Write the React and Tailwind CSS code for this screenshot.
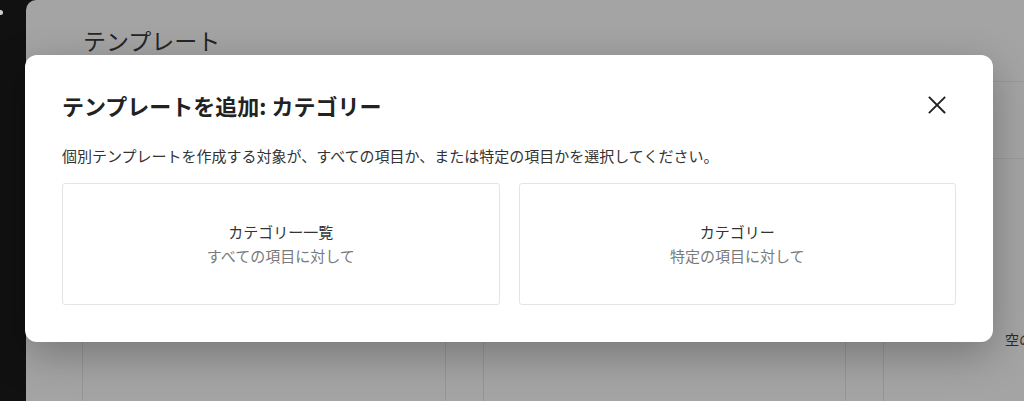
import React from "react";

const font = { fontFamily: '"Noto Sans CJK JP", "Noto Sans", sans-serif' };

export default function App() {
  return (
    <div className="relative w-[1024px] h-[401px] overflow-hidden bg-[#111111] flex" style={font}>
      {/* sidebar */}
      <div className="w-[26px] shrink-0 relative">
        <div className="absolute left-0 top-[10px] w-[3px] h-[5px] rounded-r-full bg-[#cfcfcf]" />
      </div>
      {/* main page (dimmed) */}
      <div className="flex-1 bg-[#a4a4a4] rounded-tl-[10px] flex flex-col">
        <div className="h-[82px] pl-[57px] pt-[24px] text-[23px] leading-[32px] text-[#262626] border-b border-[#999999]">
          テンプレート
        </div>
        <div className="h-[77px] border-b border-[#999999]" />
        <div className="flex-1 flex pl-[56px]">
          <div className="w-[363px] border-l border-[#959595]" />
          <div className="w-[38px] border-l border-[#959595]" />
          <div className="w-[362px] border-l border-[#959595]" />
          <div className="w-[38px] border-l border-[#959595]" />
          <div className="flex-1 border-l border-[#959595] pl-[121px] pt-[170px] text-[14px] leading-[20px] text-[#2a2a2a] whitespace-nowrap">
            空の
          </div>
        </div>
      </div>

      {/* modal */}
      <div className="absolute left-[25px] top-[55px] w-[968px] h-[287px] bg-white rounded-[12px] shadow-[0_12px_40px_rgba(0,0,0,0.28)] px-[37px] pt-[35px] flex flex-col">
        <div className="flex items-center justify-between h-[30px]">
          <h2 className="text-[22px] leading-[30px] font-bold text-[#222222]">
            テンプレートを追加: カテゴリー
          </h2>
          <button className="w-[24px] h-[24px] mr-[7px] flex items-center justify-center text-[#222222]">
            <svg width="20" height="20" viewBox="0 0 20 20" fill="none" stroke="currentColor" strokeWidth="1.8" strokeLinecap="square">
              <path d="M2.5 2.5 L17.5 17.5 M17.5 2.5 L2.5 17.5" />
            </svg>
          </button>
        </div>
        <p className="mt-[25px] text-[15px] leading-[22px] text-[#333333]">
          個別テンプレートを作成する対象が、すべての項目か、または特定の項目かを選択してください。
        </p>
        <div className="mt-[16px] flex gap-[19px]">
          {[
            ["カテゴリー一覧", "すべての項目に対して"],
            ["カテゴリー", "特定の項目に対して"],
          ].map(([t, s]) => (
            <div
              key={t}
              className="flex-1 h-[122px] border border-[#e4e4e4] rounded-[3px] flex flex-col items-center justify-center"
            >
              <div className="text-[15px] leading-[24px] text-[#333333]">{t}</div>
              <div className="text-[15px] leading-[24px] text-[#7a7a7a]">{s}</div>
            </div>
          ))}
        </div>
      </div>
    </div>
  );
}
